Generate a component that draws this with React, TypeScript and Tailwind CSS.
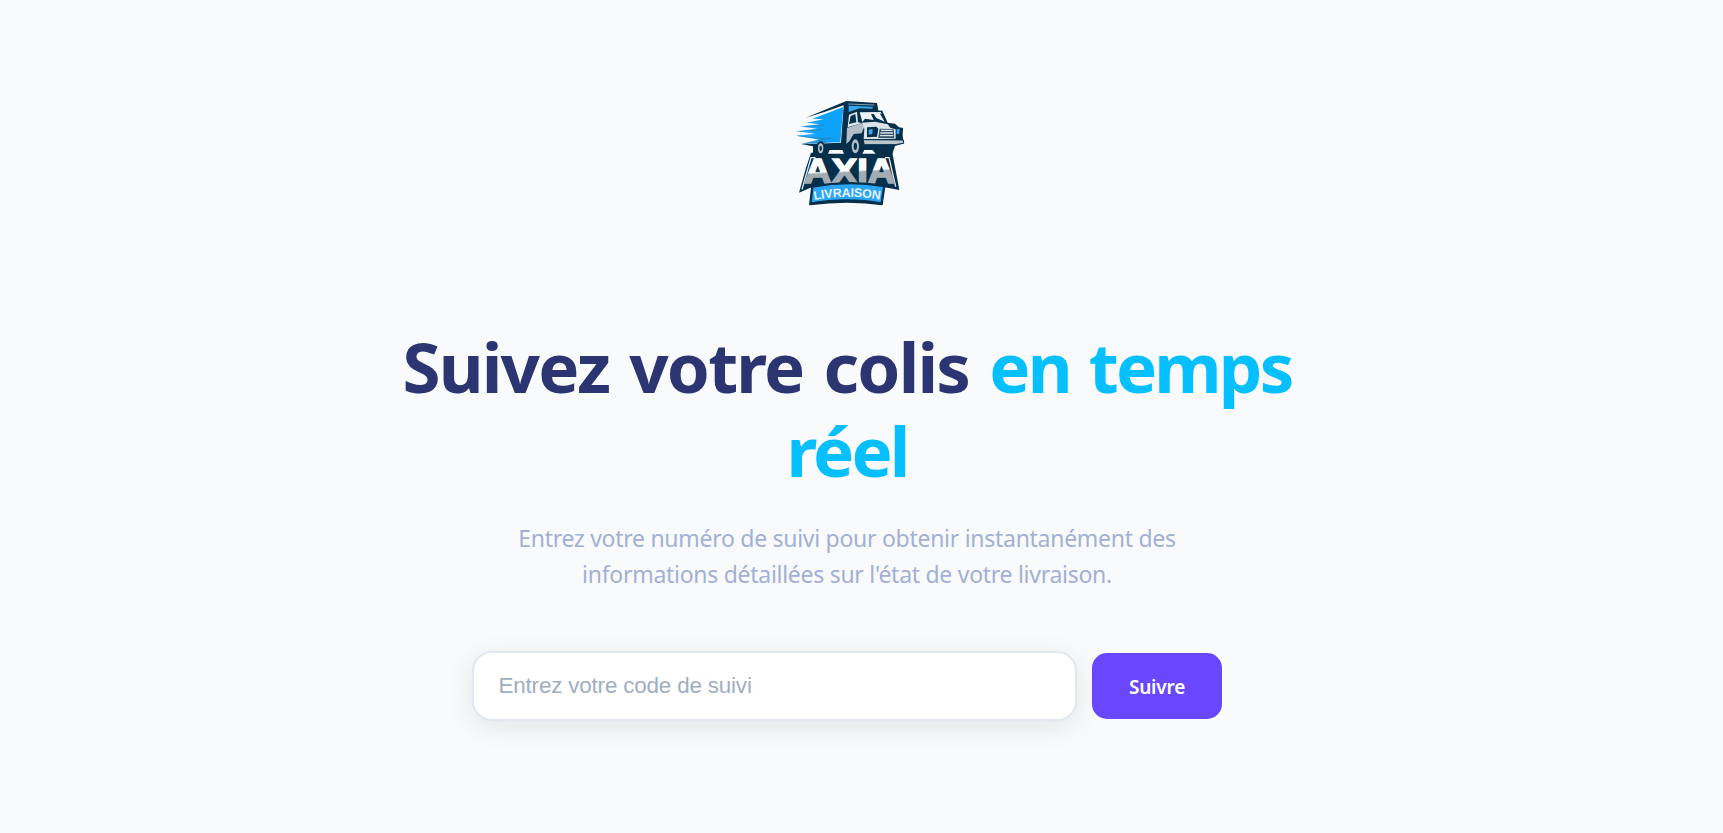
function Logo() {
  return (
    <svg viewBox="0 0 390 360" className="h-[120px] w-[130px]" role="img" aria-label="Axia Livraison">
      <defs>
        <linearGradient id="steel" gradientUnits="userSpaceOnUse" x1="80" y1="198" x2="84" y2="276">
          <stop offset="0.64" stopColor="#fbfcfd" />
          <stop offset="0.7" stopColor="#a3acb3" />
          <stop offset="1" stopColor="#a3acb3" />
        </linearGradient>
        <linearGradient id="sky" x1="0" y1="0" x2="1" y2="0">
          <stop offset="0" stopColor="#3db4fa" />
          <stop offset="0.5" stopColor="#0ea2fb" />
          <stop offset="1" stopColor="#0ea2fb" />
        </linearGradient>
      </defs>
      {/* cargo box */}
      <path d="M62 83 L184 33 L276 39 L280 62 L208 72 L208 192 L84 190 L84 169 L50 163 L168 158 L176 46 L118 66 Z" fill="#062f4c" />
      {/* speed streaks */}
      <path
        d="M175 51 L166 157 L54 161 L104 149 L33 137 L90 131 L32 124 L96 116 L44 109 L106 103 L64 98 L116 88 L82 86 L120 72 Z"
        fill="url(#sky)"
      />
      <path d="M38 137 L98 145 L140 144 L96 151 L52 162 L122 156 L100 150 M58 111 L118 104 M44 125 L112 119" fill="none" stroke="#35739b" strokeWidth="1.5" />
      <path d="M191 47 L264 50 L262 56 L224 55 L191 66 Z" fill="#35a9ee" />
      <path d="M190 42 L268 45" stroke="#b9dff4" strokeWidth="2" />
      {/* cab */}
      <path d="M190 68 L220 58 L292 62 L308 98 L330 101 L342 112 L354 114 L353 138 L356 160 L330 168 L320 198 L188 198 Z" fill="#062f4c" />
      <path d="M192 74 L216 65 L219 97 L230 99 L188 112 Z" fill="#dfe7ec" />
      <path d="M197 78 L211 72 L214 97 L192 102 Z" fill="#062f4c" />
      <path d="M224 67 L287 66 L291 72 L284 70 L299 95 L274 84 L266 72 L258 72 L266 90 L240 86 L232 96 Z" fill="#eef4f7" />
      <path d="M186 114 L228 99 L238 110 L230 130 L206 132 L194 152 L184 162 Z" fill="#b4bec6" />
      <path d="M230 98 L270 95 L308 103 L316 113 L332 118 L332 146 L236 148 L238 116 Z" fill="#dce3e7" />
      <path d="M246 112 L274 110 L280 116 L276 140 L246 142 Z" fill="#062f4c" />
      <path d="M251 119 L263 117 L262 132 L251 134 Z" fill="#36a9f2" />
      <path d="M284 116 L326 117 L328 144 L280 144 Z" fill="#31516a" />
      <path d="M288 121 H323 M286 129 H324 M285 137 H325" stroke="#dbe2e6" strokeWidth="4" />
      <path d="M335 118 L344 117 L343 131 L335 133 Z" fill="#36a9f2" />
      <path d="M234 149 L355 150 L356 160 L330 164 L238 164 Z" fill="#bbc5cb" stroke="#062f4c" strokeWidth="3" />
      {/* wordmark plate */}
      <path d="M78 188 L322 188 L343 300 L298 292 L292 346 Q190 330 74 346 L80 292 L42 308 L62 237 Z" fill="#062f4c" />
      <path d="M51 298 L78 203 L92 203" fill="none" stroke="#e6ecf0" strokeWidth="4" />
      <path d="M332 290 L312 203 L300 203" fill="none" stroke="#e6ecf0" strokeWidth="4" />
      <path d="M134 180 L172 180 L177 191 L129 191 Z M238 180 L262 180 L272 191 L232 191 Z" fill="#f8fafc" />
      {/* wheels */}
      <ellipse cx="107" cy="174" rx="13" ry="20" fill="#062f4c" />
      <ellipse cx="107" cy="175" rx="8" ry="15" fill="#b4bec6" />
      <ellipse cx="107" cy="175" rx="3.5" ry="8" fill="#062f4c" />
      <ellipse cx="212" cy="166" rx="18" ry="27" fill="#062f4c" />
      <ellipse cx="211" cy="169" rx="11" ry="21" fill="#b4bec6" />
      <ellipse cx="211" cy="169" rx="5" ry="11" fill="#062f4c" />
      <g fill="url(#steel)" stroke="url(#steel)" strokeWidth="5" fontWeight="700" fontSize="106" className="font-['Liberation_Sans']">
        <text x="57" y="279" textLength="82" lengthAdjust="spacingAndGlyphs">A</text>
        <text x="140" y="279" textLength="76" lengthAdjust="spacingAndGlyphs">X</text>
        <text x="217" y="279" textLength="32" lengthAdjust="spacingAndGlyphs">I</text>
        <text x="248" y="279" textLength="82" lengthAdjust="spacingAndGlyphs">A</text>
      </g>
      {/* ribbon */}
      <path d="M82 290 Q190 270 298 288 L290 341 Q190 322 76 341 Z" fill="#2aa6f5" stroke="#062f4c" strokeWidth="7" />
      <path id="ribbon" d="M88 330 Q190 311 290 330" fill="none" />
      <text fill="#e8f3fa" fontSize="37" fontWeight="700" className="font-['Liberation_Sans']">
        <textPath href="#ribbon" textLength="198" lengthAdjust="spacing">LIVRAISON</textPath>
      </text>
    </svg>
  );
}

export default function App() {
  return (
    <main className="flex min-h-screen flex-col items-center bg-[#f8fafc] pt-[90px] pr-[29px] font-['Noto_Sans',sans-serif]">
      <div className="pl-[5px]">
        <Logo />
      </div>
      <h1 className="mt-[114px] w-[950px] text-center text-[69px] leading-[84px] font-bold tracking-[-1.8px] text-[#2a3572] [word-spacing:4px]">
        Suivez votre colis <span className="tracking-[-2.8px] text-[#05bfff]">en temps<br />réel</span>
      </h1>
      <p className="mt-[28px] w-[750px] text-center text-[23px] leading-[36px] tracking-[-0.28px] text-[#a3b0d5]">
        Entrez votre numéro de suivi pour obtenir instantanément des
        <br />
        informations détaillées sur l'état de votre livraison.
      </p>
      <form className="mt-[59px] flex w-[750px] items-center gap-[15px]" onSubmit={(e) => e.preventDefault()}>
        <input
          type="text"
          placeholder="Entrez votre code de suivi"
          className="h-[70px] w-[605px] rounded-[20px] border-2 border-[#e2e8f0] bg-white px-[24.5px] font-['Liberation_Sans',sans-serif] text-[22.4px] tracking-[-0.17px] shadow-[0_6px_28px_rgba(0,0,0,0.09)] outline-none placeholder:text-[#a0aec0]"
        />
        <button
          type="submit"
          className="h-[66px] w-[130px] rounded-[15px] bg-[#6947ff] pt-[3px] text-[19px] font-semibold tracking-[-0.2px] text-white"
        >
          Suivre
        </button>
      </form>
    </main>
  );
}
